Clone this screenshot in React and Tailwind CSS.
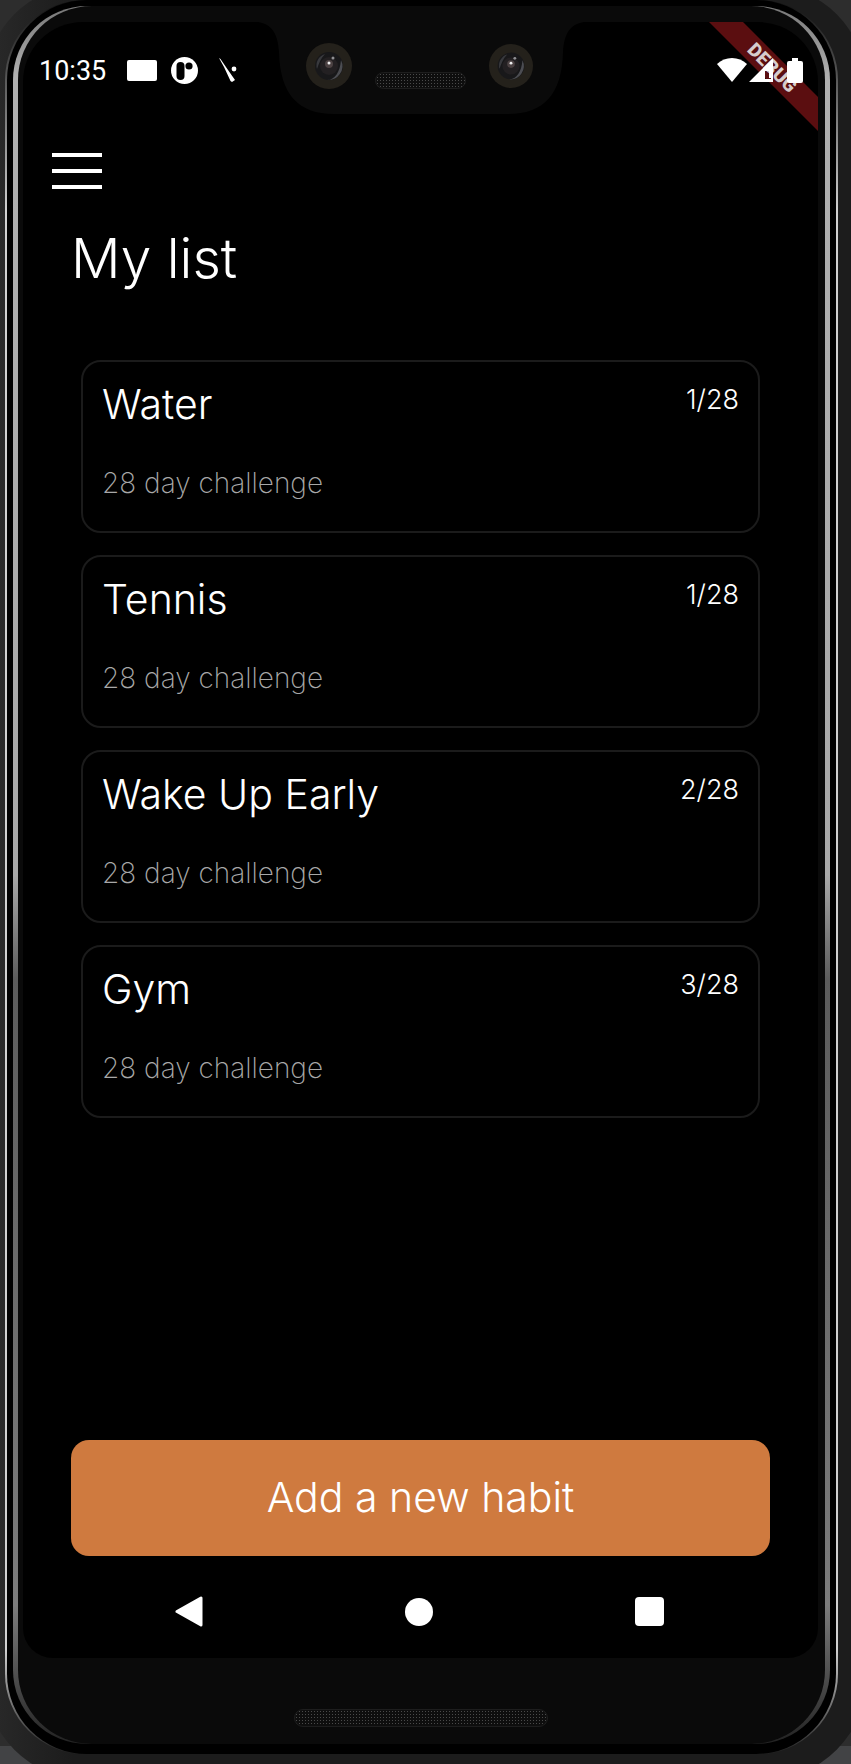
const habits = [
  { name: "Water", done: 1 },
  { name: "Tennis", done: 1 },
  { name: "Wake Up Early", done: 2 },
  { name: "Gym", done: 3 },
];

const TOTAL_DAYS = 28;

function Speaker({ className }) {
  return (
    <div
      className={`rounded-full border border-[#1e1e1e] bg-[#0e0e0e] bg-[radial-gradient(#4a4a4a_1px,transparent_1px)] bg-size-[3px_3px] ${className}`}
    />
  );
}

function Camera({ className }) {
  return (
    <svg viewBox="0 0 46 46" className={className} aria-hidden="true">
      <circle cx="23" cy="23" r="23" fill="#24211b" />
      <circle cx="23" cy="23" r="14" fill="#18181a" />
      <path d="M35 17a14 14 0 0 1-14 20c8 0 13-8 14-20Z" fill="#4c4d52" />
      <path d="M11 26a12 12 0 0 1 8-15c-4 4-6 9-8 15Z" fill="#38393d" />
      <circle cx="23" cy="23" r="9" fill="#232022" />
      <circle cx="23" cy="21" r="4" fill="#4b4142" />
      <circle cx="23" cy="20" r="1.500" fill="#eeeeee" />
      <circle cx="27" cy="15" r="1.500" fill="#909094" />
    </svg>
  );
}

function Notch() {
  return (
    <div className="absolute top-0 left-1/2 h-[92px] w-[326px] -translate-x-1/2">
      <svg viewBox="0 0 326 92" className="absolute inset-0 size-full" aria-hidden="true">
        <path d="M0 0C14 2 20 12 21 30C22 72 40 92 76 92H250C286 92 304 72 305 30C306 12 312 2 326 0Z" fill="#0a0a0a" />
      </svg>
      <div className="relative flex items-center justify-between pt-5 pr-[51px] pl-[48px]">
        <Camera className="size-[46px]" />
        <Speaker className="mt-[30px] h-[17px] w-[91px]" />
        <Camera className="size-[44px]" />
      </div>
    </div>
  );
}

function DebugBanner() {
  return (
    <div className="pointer-events-none absolute top-0 right-0 size-[112px] overflow-hidden">
      <div className="absolute top-[34px] left-[-16px] flex h-6 w-[164px] rotate-45 items-center justify-center bg-[#5b0e10] font-[Roboto,sans-serif] text-[19px] font-black text-[#d6cccc]">
        DEBUG
      </div>
    </div>
  );
}

function StatusBar() {
  return (
    <div className="flex h-[96px] items-center justify-between pr-[15px] pl-4 font-[Roboto,sans-serif] text-white">
      <div className="flex items-center">
        <span className="pt-[2px] text-[27px]">10:35</span>
        <div className="ml-[21px] h-[21px] w-[30px] rounded-xs bg-white" />
        <svg viewBox="0 0 27 27" className="ml-[14px] size-[27px]" aria-hidden="true">
          <circle cx="13.5" cy="13.5" r="13.5" fill="white" />
          <rect x="5.5" y="5" width="8" height="18" rx="4" fill="black" />
          <circle cx="18" cy="9" r="3.6" fill="black" />
        </svg>
        <svg viewBox="0 0 18 24" className="ml-[21px] h-6 w-[18px]" aria-hidden="true">
          <path d="M0 0L1.500 1L9 12L16 22L13 24L11.500 23L5 9Z" fill="white" />
          <circle cx="15" cy="11" r="2.400" fill="white" />
        </svg>
      </div>
      <div className="relative z-10 flex items-center">
        <svg viewBox="0 0 30 24" className="h-6 w-[30px]" aria-hidden="true">
          <path d="M15 24L0 6C8-2 22-2 30 6Z" fill="white" />
        </svg>
        <svg viewBox="0 0 25 24" className="ml-[2px] h-6 w-[25px]" aria-hidden="true">
          <path fillRule="evenodd" d="M0 24L24 0V24ZM16 13V21H22V20H20V13Z" fill="white" />
        </svg>
        <svg viewBox="0 0 16 25" className="ml-[13px] h-[25px] w-4" aria-hidden="true">
          <path d="M5 0H11V3H14Q16 3 16 5V23Q16 25 14 25H2Q0 25 0 23V5Q0 3 2 3H5Z" fill="white" />
        </svg>
      </div>
    </div>
  );
}

function HabitCard({ name, done }) {
  return (
    <li className="flex h-[173px] items-start justify-between rounded-[20px] border-2 border-[#1b1b1b] px-[19px] pt-[18px]">
      <div>
        <h2 className="text-[41px] leading-[48px] font-light">{name}</h2>
        <p className="mt-[37px] text-[28px] leading-9 font-extralight text-[#a8a8a8]">{TOTAL_DAYS} day challenge</p>
      </div>
      <span className="text-[27px] leading-10 font-light">
        {done}/{TOTAL_DAYS}
      </span>
    </li>
  );
}

function NavBar() {
  return (
    <nav className="flex h-[102px] items-center justify-between pt-[9px] pr-[154px] pl-[152px]">
      <button type="button" aria-label="Back" className="flex h-12 items-center">
        <svg viewBox="0 0 28 31" className="h-[31px] w-7" aria-hidden="true">
          <path d="M2 15.500L26 2V29Z" fill="white" stroke="white" strokeWidth="3" strokeLinejoin="round" />
        </svg>
      </button>
      <button type="button" aria-label="Home" className="flex h-12 items-center">
        <span className="size-7 rounded-full bg-white" />
      </button>
      <button type="button" aria-label="Recent apps" className="flex h-12 items-center">
        <span className="size-[29px] rounded-sm bg-white" />
      </button>
    </nav>
  );
}

function Screen() {
  return (
    <div className="relative flex grow flex-col overflow-hidden rounded-t-[60px] rounded-b-[30px] bg-black font-[Inter,sans-serif] text-white">
      <Notch />
      <DebugBanner />
      <StatusBar />

      <main className="flex grow flex-col px-12">
        <button type="button" aria-label="Open menu" className="mt-[35px] -ml-[19px] flex w-[50px] flex-col gap-3">
          <span className="h-1 w-full bg-white" />
          <span className="h-1 w-full bg-white" />
          <span className="h-1 w-full bg-white" />
        </button>

        <h1 className="mt-[35px] text-[55px] leading-[68px] font-light">My list</h1>

        <ul className="mt-[68px] flex flex-col gap-[22px] px-[10px]">
          {habits.map((habit) => (
            <HabitCard key={habit.name} {...habit} />
          ))}
        </ul>

        <button
          type="button"
          className="mt-auto h-[116px] w-full rounded-[18px] bg-[#cf7a3f] text-[41px] font-light"
        >
          Add a new habit
        </button>
      </main>

      <NavBar />
    </div>
  );
}

export default function App() {
  return (
    <div className="flex min-h-screen flex-col overflow-hidden bg-[linear-gradient(to_top,#424345_18px,#2d2d2d_18px)]">
      {/* phone body, slightly larger than the window */}
      <div className="-m-[15px] flex grow flex-col rounded-[100px] bg-[linear-gradient(to_right,#2a2a2a,#1c1c1c_10%)] pt-[15px] pr-7 pb-[25px] pl-5">
        {/* outer metal rim */}
        <div className="flex grow flex-col rounded-[80px] bg-[linear-gradient(#111,#d0d0d0_12%,#d0d0d0_94%,#222)] px-[2px]">
          <div className="flex grow flex-col rounded-[80px] bg-black px-[6px] pt-[6px] pb-[10px]">
            {/* inner metal rim */}
            <div className="flex grow flex-col rounded-[74px] bg-[linear-gradient(#777,#b0b0b0_4%,#a8a8a8_50%,#5c5c5c_56%,#7c7c7c_92%,#222)] px-[5px]">
              <div className="flex grow flex-col rounded-[74px] bg-[#0a0a0a] pt-4 pr-[7px] pl-[5px]">
                <Screen />
                <div className="flex h-[86px] justify-center pt-[51px]">
                  <Speaker className="h-[18px] w-[254px]" />
                </div>
              </div>
            </div>
          </div>
        </div>
      </div>
    </div>
  );
}
